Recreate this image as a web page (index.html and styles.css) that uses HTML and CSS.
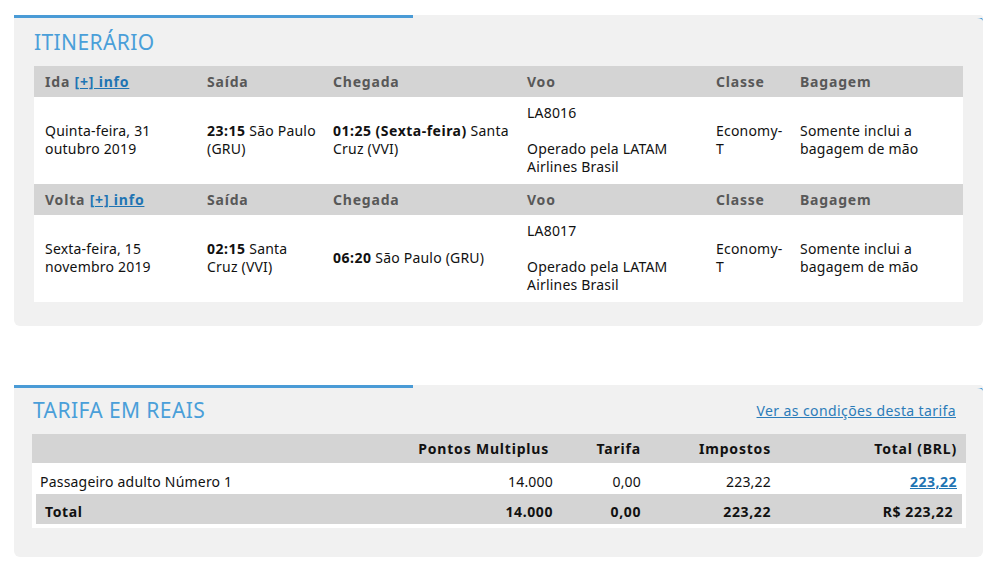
FILE: index.html
```html
<!DOCTYPE html>
<html lang="pt-BR">
<head>
  <meta charset="UTF-8">
  <meta name="viewport" content="width=device-width, initial-scale=1.0">
  <title>Itinerário e tarifa</title>
  <link rel="stylesheet" href="styles.css">
</head>
<body>

  <div class="panel itinerary">
    <h2 class="panel-title">ITINERÁRIO</h2>
    <table class="trip">
      <colgroup>
        <col class="c-date">
        <col class="c-dep">
        <col class="c-arr">
        <col class="c-flight">
        <col class="c-class">
        <col class="c-bag">
      </colgroup>
      <tr class="trip-head">
        <th>Ida <a href="#">[+] info</a></th>
        <th>Saída</th>
        <th>Chegada</th>
        <th>Voo</th>
        <th>Classe</th>
        <th>Bagagem</th>
      </tr>
      <tr>
        <td>Quinta-feira, 31 outubro 2019</td>
        <td><b>23:15</b> São Paulo (GRU)</td>
        <td><b>01:25 (Sexta-feira)</b> Santa Cruz (VVI)</td>
        <td>LA8016<br><br>Operado pela LATAM Airlines Brasil</td>
        <td>Economy-T</td>
        <td>Somente inclui a bagagem de mão</td>
      </tr>
      <tr class="trip-head">
        <th>Volta <a href="#">[+] info</a></th>
        <th>Saída</th>
        <th>Chegada</th>
        <th>Voo</th>
        <th>Classe</th>
        <th>Bagagem</th>
      </tr>
      <tr>
        <td>Sexta-feira, 15 novembro 2019</td>
        <td><b>02:15</b> Santa Cruz (VVI)</td>
        <td><b>06:20</b> São Paulo (GRU)</td>
        <td>LA8017<br><br>Operado pela LATAM Airlines Brasil</td>
        <td>Economy-T</td>
        <td>Somente inclui a bagagem de mão</td>
      </tr>
    </table>
  </div>

  <div class="panel fare">
    <div class="fare-top">
      <h2 class="panel-title">TARIFA EM REAIS</h2>
      <a href="#" class="conditions">Ver as condições desta tarifa</a>
    </div>
    <table class="prices">
      <colgroup>
        <col class="p-name">
        <col class="p-points">
        <col class="p-fare">
        <col class="p-tax">
        <col class="p-total">
      </colgroup>
      <tr class="prices-head">
        <th></th>
        <th class="points-head">Pontos Multiplus</th>
        <th>Tarifa</th>
        <th>Impostos</th>
        <th>Total (BRL)</th>
      </tr>
      <tr class="prices-row">
        <td>Passageiro adulto Número 1</td>
        <td>14.000</td>
        <td>0,00</td>
        <td>223,22</td>
        <td><a href="#">223,22</a></td>
      </tr>
      <tr class="prices-total">
        <td>Total</td>
        <td>14.000</td>
        <td>0,00</td>
        <td>223,22</td>
        <td>R$ 223,22</td>
      </tr>
    </table>
  </div>

</body>
</html>
```

FILE: styles.css
```css
body {
  margin: 0;
  padding: 15px 0 0 14px;
  background: #fff;
  font-family: "Noto Sans", sans-serif;
  font-size: 14px;
  color: #111;
}

.panel {
  width: 969px;
  box-sizing: border-box;
  background: #f1f1f1;
  border-top: 3px solid #4a9bd6;
  border-radius: 0 6px 6px 6px;
  position: relative;
}

/* the blue line only covers the left part of the panel */
.panel::after {
  content: "";
  position: absolute;
  top: -3px;
  left: 399px;
  right: 0;
  height: 3px;
  background: #f1f1f1;
  border-radius: 0 6px 0 0;
}

.panel-title {
  margin: 0;
  font-size: 21px;
  font-weight: 400;
  letter-spacing: 0.4px;
  color: #4a9fd9;
  line-height: 24px;
}

.itinerary {
  padding: 12px 20px 25px 20px;
  height: 311px;
}

.itinerary .panel-title {
  margin-bottom: 12px;
}

.trip {
  width: 929px;
  border-collapse: collapse;
  table-layout: fixed;
  background: #fff;
  line-height: 18px;
  letter-spacing: 0.2px;
}

.c-date { width: 162px; }
.c-dep { width: 126px; }
.c-arr { width: 194px; }
.c-flight { width: 189px; }
.c-class { width: 84px; }
.c-bag { width: 174px; }

.trip-head th {
  background: #d4d4d4;
  color: #585858;
  text-align: left;
  font-weight: 700;
  letter-spacing: 0.8px;
  height: 31px;
  padding: 0 6px 0 11px;
  box-sizing: border-box;
}

.trip-head a {
  color: #1f74b3;
}

.trip td {
  padding: 7px 5px 8px 11px;
  vertical-align: middle;
}

.trip b {
  letter-spacing: 0.5px;
}

.fare {
  margin-top: 59px;
  padding: 10px 17px 29px 18px;
  height: 172px;
}

.fare-top {
  display: flex;
  justify-content: space-between;
  align-items: center;
  padding: 0 10px 0 1px;
  margin-bottom: 12px;
}

.conditions {
  color: #2b7cb9;
  font-size: 14px;
  letter-spacing: 0.4px;
}

.prices {
  width: 934px;
  border-collapse: separate;
  border-spacing: 0;
  table-layout: fixed;
  background: #fff;
  letter-spacing: 0.2px;
}

.p-name { width: 368px; }
.p-points { width: 161px; }
.p-fare { width: 88px; }
.p-tax { width: 130px; }
.p-total { width: 187px; }

.prices th,
.prices td {
  text-align: right;
  padding: 0 8px;
}

.prices th:first-child,
.prices td:first-child {
  text-align: left;
}

.prices-head th {
  background: #d4d4d4;
  font-weight: 700;
  letter-spacing: 0.8px;
  height: 29px;
}

.prices-head .points-head {
  padding-right: 12px;
}

.prices-head th:last-child {
  padding-right: 9px;
}

.prices-row td {
  height: 31px;
  padding-top: 6px;
  box-sizing: border-box;
}

.prices-row td:last-child {
  padding-right: 9px;
}

.prices-row a {
  color: #1f74b3;
  font-weight: 700;
  letter-spacing: 0.5px;
}

.prices-total td {
  background: #d4d4d4;
  font-weight: 700;
  letter-spacing: 0.6px;
  height: 34px;
  box-sizing: border-box;
  border-bottom: 4px solid #fff;
  padding-top: 4px;
}

.prices-total td:first-child {
  border-left: 4px solid #fff;
  padding-left: 9px;
}

.prices-total td:last-child {
  border-right: 4px solid #fff;
  padding-right: 9px;
}
```
